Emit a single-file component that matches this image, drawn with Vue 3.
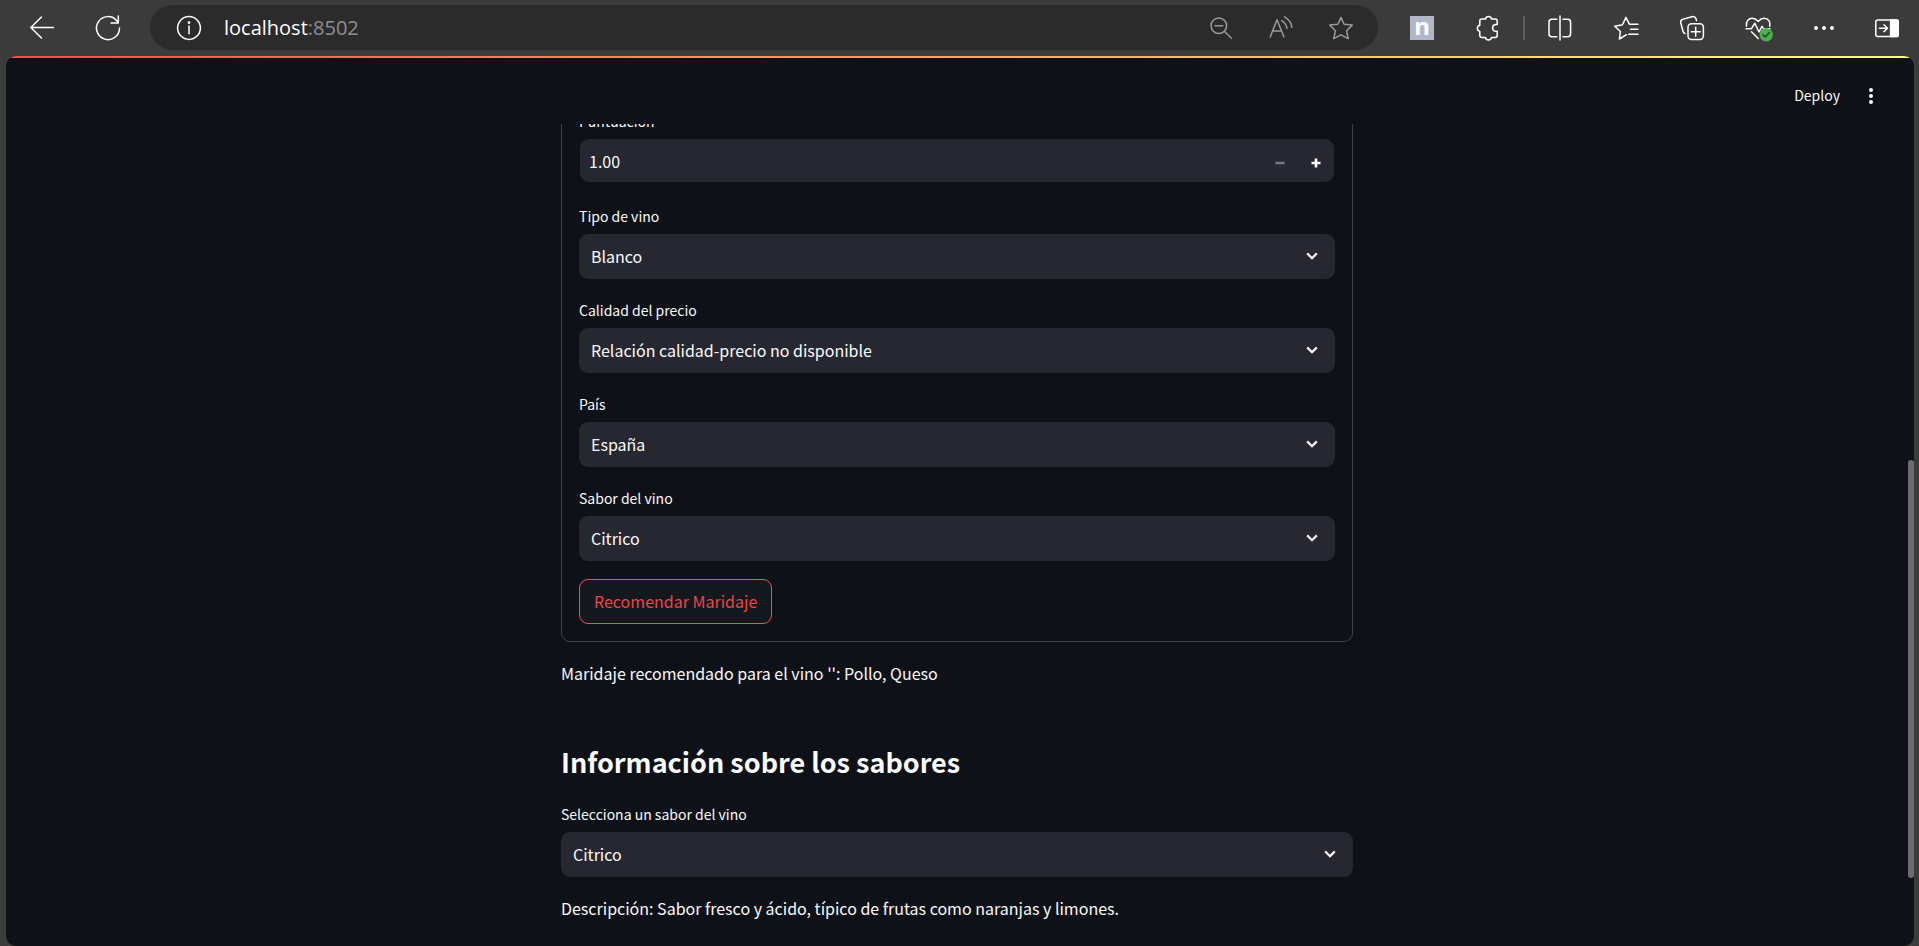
<script setup>
import { ref } from 'vue'

const score = ref('1.00')
const selects = ref([
  { id: 'tipo', label: 'Tipo de vino', value: 'Blanco', options: ['Blanco'] },
  {
    id: 'calidad',
    label: 'Calidad del precio',
    value: 'Relación calidad-precio no disponible',
    options: ['Relación calidad-precio no disponible'],
  },
  { id: 'pais', label: 'País', value: 'España', options: ['España'] },
  { id: 'sabor', label: 'Sabor del vino', value: 'Citrico', options: ['Citrico'] },
])
const flavour = ref('Citrico')
</script>

<template>
  <div class="browser">
    <nav class="toolbar" aria-label="Navegador">
      <button class="tool" type="button" aria-label="Atrás">
        <svg viewBox="0 0 24 24"><path d="M23.5 11.5H.8M11.5 1 .8 11.5 11.5 22" /></svg>
      </button>
      <button class="tool" type="button" aria-label="Actualizar">
        <svg viewBox="0 0 24 24"><path d="M23.5 12A11.5 11.5 0 1 1 20.8 4.7L22.3 6.8M22.3 0V6.9H15" /></svg>
      </button>
      <div class="address">
        <button class="tool" type="button" aria-label="Información del sitio">
          <svg viewBox="0 0 24 24"><circle cx="12" cy="12" r="11.4" /><path d="M12 10V17.8" /><circle class="solid" cx="12" cy="6.6" r=".6" /></svg>
        </button>
        <a class="url" href="#">localhost<span class="port">:8502</span></a>
        <button class="tool dim" type="button" aria-label="Alejar">
          <svg viewBox="0 0 24 24"><circle cx="9.8" cy="9.8" r="7.8" /><path d="M6 9.8H13.8M15.5 15.5 22.5 22.3" /></svg>
        </button>
        <button class="tool dim" type="button" aria-label="Leer en voz alta">
          <svg viewBox="0 0 24 24"><path d="M1.2 21 8 3.8 15 21M3.6 15H12.6M12.8 4.6Q17 7.3 18 12.3M15.5.8Q22 4.5 23 11.3" /></svg>
        </button>
        <button class="tool dim" type="button" aria-label="Agregar a favoritos">
          <svg viewBox="0 0 24 24"><path d="M12 1.4 15.1 8.2 23.2 9.1 17.6 14.8 19.2 22.6 12 18.8 4.8 22.6 6.4 14.8.8 9.1 8.9 8.2Z" /></svg>
        </button>
      </div>
      <button class="tool" type="button" aria-label="Extensión"><span class="tile">n</span></button>
      <button class="tool" type="button" aria-label="Extensiones">
        <svg viewBox="0 0 24 24"><path d="M5.7 3H9.4A3.2 3.2 0 0 1 15.6 3H19.3Q21.2 3 21.2 4.9V8.6H20A3.3 3.3 0 0 0 20 15.2H21.2V19.6Q21.2 21.5 19.3 21.5H15.6A3.2 3.2 0 0 1 9.4 21.5H5.7Q3.8 21.5 3.8 19.6V15.4A3.2 3.2 0 0 1 3.8 9.2V4.9Q3.8 3 5.7 3Z" /></svg>
      </button>
      <span class="divider"></span>
      <button class="tool" type="button" aria-label="Pantalla dividida">
        <svg viewBox="0 0 24 24"><path d="M12 0V24M8.8 3.2H4Q1 3.2 1 6.2V17.8Q1 20.8 4 20.8H8.8M15 3.2H19.6Q22.6 3.2 22.6 6.2V17.8Q22.6 20.8 19.6 20.8H15" /></svg>
      </button>
      <button class="tool" type="button" aria-label="Favoritos">
        <svg viewBox="0 0 24 24"><path d="M12.5 18.7 5.4 23 6.4 15.5.7 10.3 8.5 8.8 11.9 1.4 15.5 8.3H24M16.5 13.2H24M14.8 18.2H24" /></svg>
      </button>
      <button class="tool" type="button" aria-label="Colecciones">
        <svg viewBox="0 0 24 24"><rect x="8" y="7.8" width="15.4" height="15.7" rx="3.4" /><path d="M15.7 11.2V20.2M11.2 15.7H20.2M5 17.6Q3.4 16.8 3 15.2L.8 7Q.2 4.2 2.8 3.2L12 .7Q15 0 16 2.8L16.5 4.6" /></svg>
      </button>
      <button class="tool" type="button" aria-label="Rendimiento">
        <svg viewBox="1 0 24 24"><path d="M1.5 10.2C.6 5.5 3.6 2.3 7.3 2.3Q10.5 2.3 13.2 5.4Q16 2.3 19.2 2.3C23.3 2.3 25.8 6 24.7 10.2M1 12.7H6.5L9.8 7.2 14 16 17 10.4 18.6 12.7H25M6.5 15.8 13.2 22.5" /><circle class="badge" cx="21.2" cy="18.7" r="6.7" /><path class="tick" d="M18 18.9 20.2 21 24.5 16.5" /></svg>
      </button>
      <button class="tool" type="button" aria-label="Configuración y más">
        <svg viewBox="0 0 24 24"><g class="solid"><circle cx="4" cy="12" r="1.2" /><circle cx="12" cy="12" r="1.2" /><circle cx="20" cy="12" r="1.2" /></g></svg>
      </button>
      <button class="tool last" type="button" aria-label="Barra lateral">
        <svg viewBox="0 0 24 24"><rect x=".8" y="4" width="22.4" height="16.6" rx="2" /><path class="solid" d="M15.6 4H22Q23.2 4 23.2 5.2V19.4Q23.2 20.6 22 20.6H15.6Z" /><path d="M4.4 12.2H12M9 8.8 12.5 12.2 9 15.6" /></svg>
      </button>
    </nav>

    <div class="page">
      <header class="header">
        <button class="deploy" type="button">Deploy</button>
        <button class="kebab" type="button" aria-label="Menú">
          <svg viewBox="0 0 6 18"><circle cx="3" cy="3" r="2" /><circle cx="3" cy="9" r="2" /><circle cx="3" cy="15" r="2" /></svg>
        </button>
      </header>

      <main class="scroller">
        <div class="content">
          <form class="form" @submit.prevent>
            <div class="field">
              <label for="puntuacion">Puntuación</label>
              <div class="number">
                <input id="puntuacion" v-model="score" type="text" inputmode="decimal" />
                <button type="button" aria-label="Restar" disabled>
                  <svg viewBox="0 0 10 10"><path d="M.5 5H9.5" /></svg>
                </button>
                <button type="button" aria-label="Sumar">
                  <svg viewBox="0 0 10 10"><path d="M.5 5H9.5M5 .5V9.5" /></svg>
                </button>
              </div>
            </div>
            <div v-for="s in selects" :key="s.id" class="field">
              <label :for="s.id">{{ s.label }}</label>
              <div class="select">
                <select :id="s.id" v-model="s.value">
                  <option v-for="o in s.options" :key="o">{{ o }}</option>
                </select>
                <svg viewBox="0 0 12 8"><path d="M1.2 1.4 6 6.2 10.8 1.4" /></svg>
              </div>
            </div>
            <button class="submit" type="submit">Recomendar Maridaje</button>
          </form>
          <p class="result">Maridaje recomendado para el vino '': Pollo, Queso</p>
          <h2>Información sobre los sabores</h2>
          <div class="field">
            <label for="sabor-info">Selecciona un sabor del vino</label>
            <div class="select">
              <select id="sabor-info" v-model="flavour">
                <option>Citrico</option>
              </select>
              <svg viewBox="0 0 12 8"><path d="M1.2 1.4 6 6.2 10.8 1.4" /></svg>
            </div>
          </div>
          <p class="description">Descripción: Sabor fresco y ácido, típico de frutas como naranjas y limones.</p>
        </div>
      </main>
      <div class="thumb"></div>
    </div>
  </div>
</template>

<style>
body {
  margin: 0;
  background: #3b3b3b;
}
</style>

<style scoped>
* {
  box-sizing: border-box;
}
.browser {
  display: flex;
  flex-direction: column;
  height: 100vh;
  overflow: hidden;
  background: #3b3b3b;
  color: #fafafa;
  font-family: "Noto Sans CJK SC", "Noto Sans", sans-serif;
  font-size: 16px;
  font-weight: 400;
}
button {
  padding: 0;
  border: 0;
  background: none;
  color: inherit;
  font: inherit;
}
.toolbar {
  display: flex;
  align-items: center;
  padding: 5px 2px 6px 9px;
}
.tool {
  display: flex;
  flex: none;
  align-items: center;
  justify-content: center;
  width: 66px;
  height: 45px;
  color: #fff;
}
.tool svg {
  height: 24px;
  overflow: visible;
  fill: none;
  stroke: currentColor;
  stroke-width: 1.5;
  stroke-linejoin: round;
  stroke-linecap: round;
}
.tool .solid {
  fill: currentColor;
}
.tool .badge {
  fill: #4caf50;
  stroke: none;
}
.tool .tick {
  stroke: #24452a;
}
.tool.dim {
  width: 60px;
  color: #9a9a9a;
}
.tool.last {
  width: 60px;
}
.address {
  display: flex;
  flex: 1;
  align-items: center;
  height: 45px;
  margin: 0 11px 0 9px;
  padding: 0 7px 0 6px;
  border-radius: 23px;
  background: #2b2b2b;
}
.url {
  flex: 1;
  padding-left: 2px;
  color: #fff;
  font: 400 20px/28px "Open Sans", "Noto Sans", sans-serif;
  text-decoration: none;
}
.port {
  color: #8f8f8f;
}
.tile {
  width: 24px;
  height: 24px;
  background: #b0b8c8;
  color: #fff;
  font: 700 24px/20px "Noto Sans", sans-serif;
  text-align: center;
}
.divider {
  width: 2px;
  height: 24px;
  margin: 0 2px;
  background: #5c5c5c;
}
.page {
  position: relative;
  display: flex;
  flex: 1;
  flex-direction: column;
  min-height: 0;
  margin: 0 5px 0 6px;
  overflow: hidden;
  border-radius: 10px;
  background: #0e1117;
}
.page::before {
  content: "";
  flex: none;
  height: 2px;
  background: linear-gradient(90deg, #ff4b4b, #fffd80);
}
.header {
  display: flex;
  flex: none;
  align-items: center;
  justify-content: flex-end;
  gap: 10px;
  height: 66px;
  padding: 10px 22px 0 0;
}
.deploy {
  padding-bottom: 2px;
  font-size: 14px;
  line-height: 24px;
}
.kebab {
  display: flex;
  align-items: center;
  justify-content: center;
  width: 42px;
  height: 36px;
}
.kebab svg {
  height: 18px;
  fill: #fafafa;
}
.scroller {
  display: flex;
  flex: 1;
  flex-direction: column;
  align-items: center;
  justify-content: flex-end;
  min-height: 0;
  padding: 0 22px 25px 16px;
  overflow: hidden;
}
.content {
  flex: none;
  width: 100%;
  max-width: 792px;
}
.form {
  display: flex;
  flex-direction: column;
  align-items: flex-start;
  gap: 18px;
  padding: 17px;
  border: 1px solid #3e4045;
  border-radius: 9px;
}
.field {
  width: 100%;
}
label {
  display: block;
  margin-bottom: 5px;
  font-size: 14px;
  line-height: 26px;
}
.number {
  display: flex;
  height: 43px;
  margin: 0 1px 3px;
  overflow: hidden;
  border-radius: 9px;
  background: #262730;
}
.number input {
  flex: 1;
  min-width: 0;
  padding: 0 9px;
  border: 0;
  outline: 0;
  background: none;
  color: inherit;
  font: inherit;
}
.number button {
  width: 36px;
}
.number svg {
  width: 10px;
  height: 10px;
  fill: none;
  stroke: #fafafa;
  stroke-width: 2.6;
}
.number button:disabled svg {
  stroke: #747887;
}
.select {
  position: relative;
}
.select select {
  display: block;
  width: 100%;
  height: 45px;
  padding: 0 40px 2px 12px;
  border: 0;
  border-radius: 9px;
  outline: 0;
  appearance: none;
  background: #262730;
  color: inherit;
  font: inherit;
}
.select svg {
  position: absolute;
  top: 18px;
  right: 17px;
  width: 12px;
  height: 8px;
  fill: none;
  stroke: #fafafa;
  stroke-width: 2.2;
  pointer-events: none;
}
.submit {
  height: 45px;
  padding: 0 14px 2px;
  border: 1px solid #ff4b4b;
  border-radius: 9px;
  background: #13171e;
  color: #ea4649;
}
p {
  margin: 18px 0 0;
  line-height: 26px;
}
h2 {
  margin: 54px 0 17px;
  font-size: 27px;
  font-weight: 700;
  line-height: 44px;
}
.thumb {
  position: absolute;
  top: 45.4%;
  right: 0;
  width: 6px;
  height: 47%;
  border-radius: 3px;
  background: #6c6d71;
}
</style>
